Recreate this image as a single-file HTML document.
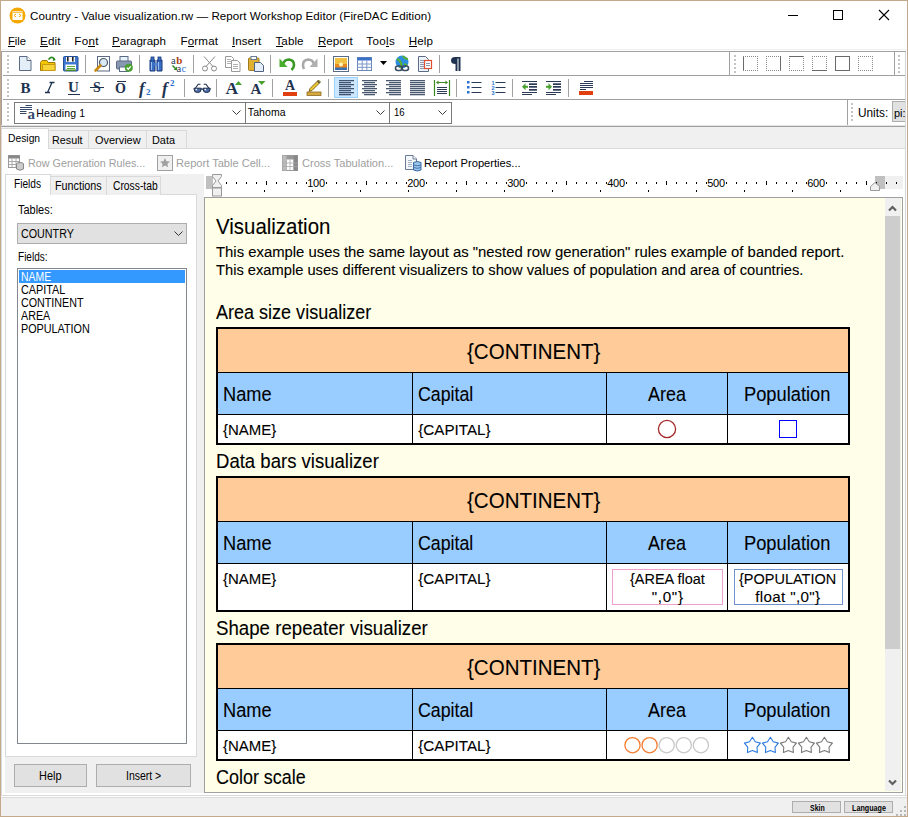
<!DOCTYPE html>
<html><head><meta charset="utf-8"><style>
html,body{margin:0;padding:0;}
body{width:908px;height:817px;position:relative;overflow:hidden;background:#fff;font-family:"Liberation Sans",sans-serif;}
.t{position:absolute;white-space:nowrap;}
.r{position:absolute;box-sizing:border-box;}
svg.r{overflow:visible;}
</style></head><body>
<svg class="r" style="left:9px;top:7px;" width="17" height="17" viewBox="0 0 17 17"><circle cx="8.5" cy="8.5" r="8" fill="#f7a800"/><rect x="3.5" y="4" width="10" height="9" fill="#fff"/><rect x="3.5" y="4" width="10" height="1.3" fill="#f7a800" opacity="0"/><path d="M3.5 5.2h10" stroke="#f7a800" stroke-width="1"/><path d="M7 7l-2 1.5 2 1.5M10 7l2 1.5-2 1.5" stroke="#f7a800" stroke-width="1" fill="none"/></svg>
<div class="t" style="left:30.00px;top:10.40px;font-size:11.6px;line-height:12px;color:#000;letter-spacing:0.053px;">Country - Value visualization.rw — Report Workshop Editor (FireDAC Edition)</div>
<div class="r" style="left:788px;top:15px;width:10px;height:1px;background:#000"></div>
<div class="r" style="left:833px;top:10px;width:10px;height:10px;border:1px solid #000"></div>
<svg class="r" style="left:878px;top:9px;" width="12" height="12" viewBox="0 0 12 12"><path d="M1 1L11 11M11 1L1 11" stroke="#000" stroke-width="1.1"/></svg>
<div class="t" style="left:8.25px;top:35.00px;font-size:11.6px;line-height:12px;color:#000;transform:scaleX(0.9638);transform-origin:0 0;">File</div>
<div class="r" style="left:8px;top:46px;width:7px;height:1px;background:#000"></div>
<div class="t" style="left:40.00px;top:35.00px;font-size:11.6px;line-height:12px;color:#000;letter-spacing:0.144px;">Edit</div>
<div class="r" style="left:40px;top:46px;width:8px;height:1px;background:#000"></div>
<div class="t" style="left:74.25px;top:35.00px;font-size:11.6px;line-height:12px;color:#000;letter-spacing:0.350px;">Font</div>
<div class="r" style="left:88px;top:46px;width:7px;height:1px;background:#000"></div>
<div class="t" style="left:112.00px;top:35.00px;font-size:11.6px;line-height:12px;color:#000;transform:scaleX(0.9968);transform-origin:0 0;">Paragraph</div>
<div class="r" style="left:112px;top:46px;width:8px;height:1px;background:#000"></div>
<div class="t" style="left:180.50px;top:35.00px;font-size:11.6px;line-height:12px;color:#000;letter-spacing:0.146px;">Format</div>
<div class="r" style="left:188px;top:46px;width:6px;height:1px;background:#000"></div>
<div class="t" style="left:232.00px;top:35.00px;font-size:11.6px;line-height:12px;color:#000;letter-spacing:0.050px;">Insert</div>
<div class="r" style="left:232px;top:46px;width:3px;height:1px;background:#000"></div>
<div class="t" style="left:275.50px;top:35.00px;font-size:11.6px;line-height:12px;color:#000;letter-spacing:0.069px;">Table</div>
<div class="r" style="left:276px;top:46px;width:7px;height:1px;background:#000"></div>
<div class="t" style="left:317.50px;top:35.00px;font-size:11.6px;line-height:12px;color:#000;transform:scaleX(0.9986);transform-origin:0 0;">Report</div>
<div class="r" style="left:318px;top:46px;width:8px;height:1px;background:#000"></div>
<div class="t" style="left:366.25px;top:35.00px;font-size:11.6px;line-height:12px;color:#000;letter-spacing:0.368px;">Tools</div>
<div class="r" style="left:386px;top:46px;width:3px;height:1px;background:#000"></div>
<div class="t" style="left:408.75px;top:35.00px;font-size:11.6px;line-height:12px;color:#000;letter-spacing:0.118px;">Help</div>
<div class="r" style="left:409px;top:46px;width:8px;height:1px;background:#000"></div>
<div class="r" style="left:1px;top:49px;width:906px;height:1px;background:#f0f0f0"></div>
<div class="r" style="left:1px;top:51px;width:905px;height:1px;background:#a0a0a0"></div>
<div class="r" style="left:1px;top:51px;width:1px;height:75px;background:#a0a0a0"></div>
<div class="r" style="left:3px;top:75px;width:903px;height:1px;background:#a0a0a0"></div>
<div class="r" style="left:3px;top:99px;width:903px;height:1px;background:#a0a0a0"></div>
<div class="r" style="left:1px;top:125px;width:905px;height:1px;background:#e3e3e3"></div>
<div class="r" style="left:1px;top:126px;width:905px;height:1px;background:#a0a0a0"></div>
<div class="r" style="left:1px;top:127px;width:905px;height:22px;background:#f0f0f0"></div>
<div class="r" style="left:48px;top:130px;width:41px;height:19px;background:#f0f0f0;border:1px solid #d9d9d9;border-bottom:none"></div>
<div class="r" style="left:88px;top:130px;width:59px;height:19px;background:#f0f0f0;border:1px solid #d9d9d9;border-bottom:none"></div>
<div class="r" style="left:146px;top:130px;width:41px;height:19px;background:#f0f0f0;border:1px solid #d9d9d9;border-bottom:none"></div>
<div class="r" style="left:1px;top:128px;width:48px;height:21px;background:#fff;border:1px solid #d9d9d9;border-bottom:none"></div>
<div class="r" style="left:48px;top:148px;width:858px;height:1px;background:#d9d9d9"></div>
<div class="t" style="left:8.40px;top:132.20px;font-size:11.6px;line-height:12px;color:#000;transform:scaleX(0.8898);transform-origin:0 0;">Design</div>
<div class="t" style="left:52.40px;top:134.40px;font-size:11.6px;line-height:12px;color:#000;transform:scaleX(0.9319);transform-origin:0 0;">Result</div>
<div class="t" style="left:94.70px;top:134.40px;font-size:11.6px;line-height:12px;color:#000;transform:scaleX(0.9425);transform-origin:0 0;">Overview</div>
<div class="t" style="left:152.40px;top:134.40px;font-size:11.6px;line-height:12px;color:#000;transform:scaleX(0.9393);transform-origin:0 0;">Data</div>
<div class="t" style="left:27.50px;top:156.80px;font-size:11.6px;line-height:12px;color:#a0a0a0;transform:scaleX(0.9286);transform-origin:0 0;">Row Generation Rules...</div>
<div class="t" style="left:176.40px;top:156.80px;font-size:11.6px;line-height:12px;color:#a0a0a0;transform:scaleX(0.9555);transform-origin:0 0;">Report Table Cell...</div>
<div class="t" style="left:301.50px;top:156.80px;font-size:11.6px;line-height:12px;color:#a0a0a0;transform:scaleX(0.9539);transform-origin:0 0;">Cross Tabulation...</div>
<div class="t" style="left:424.40px;top:156.80px;font-size:11.6px;line-height:12px;color:#000;transform:scaleX(0.9615);transform-origin:0 0;">Report Properties...</div>
<div class="r" style="left:5px;top:174px;width:199px;height:619px;background:#f0f0f0"></div>
<div class="r" style="left:5px;top:194px;width:192px;height:563px;background:#fff;border:1px solid #d9d9d9"></div>
<div class="r" style="left:50px;top:176px;width:57px;height:19px;background:#f0f0f0;border:1px solid #d9d9d9;border-bottom:none"></div>
<div class="r" style="left:106px;top:176px;width:55px;height:19px;background:#f0f0f0;border:1px solid #d9d9d9;border-bottom:none"></div>
<div class="r" style="left:5px;top:174px;width:46px;height:21px;background:#fff;border:1px solid #d9d9d9;border-bottom:none"></div>
<div class="t" style="left:13.70px;top:177.00px;font-size:12px;line-height:14px;color:#000;transform:scaleX(0.8458);transform-origin:0 0;">Fields</div>
<div class="t" style="left:55.00px;top:178.60px;font-size:12px;line-height:14px;color:#000;transform:scaleX(0.8986);transform-origin:0 0;">Functions</div>
<div class="t" style="left:113.40px;top:178.60px;font-size:12px;line-height:14px;color:#000;transform:scaleX(0.8584);transform-origin:0 0;">Cross-tab</div>
<div class="t" style="left:17.60px;top:202.80px;font-size:12px;line-height:14px;color:#000;transform:scaleX(0.9122);transform-origin:0 0;">Tables:</div>
<div class="r" style="left:17px;top:223px;width:170px;height:21px;background:#e1e1e1;border:1px solid #adadad"></div>
<div class="t" style="left:21.40px;top:227.00px;font-size:12px;line-height:14px;color:#000;transform:scaleX(0.8942);transform-origin:0 0;">COUNTRY</div>
<div class="t" style="left:17.60px;top:249.80px;font-size:12px;line-height:14px;color:#000;transform:scaleX(0.8362);transform-origin:0 0;">Fields:</div>
<div class="r" style="left:17px;top:268px;width:170px;height:476px;background:#fff;border:1px solid #828790"></div>
<div class="r" style="left:19px;top:270px;width:166px;height:13px;background:#3399ff"></div>
<div class="t" style="left:21.40px;top:270.00px;font-size:12px;line-height:14px;color:#fff;transform:scaleX(0.8679);transform-origin:0 0;">NAME</div>
<div class="t" style="left:21.40px;top:283.00px;font-size:12px;line-height:14px;color:#000;transform:scaleX(0.9026);transform-origin:0 0;">CAPITAL</div>
<div class="t" style="left:21.40px;top:296.00px;font-size:12px;line-height:14px;color:#000;transform:scaleX(0.8934);transform-origin:0 0;">CONTINENT</div>
<div class="t" style="left:21.40px;top:309.00px;font-size:12px;line-height:14px;color:#000;transform:scaleX(0.8944);transform-origin:0 0;">AREA</div>
<div class="t" style="left:21.40px;top:322.00px;font-size:12px;line-height:14px;color:#000;transform:scaleX(0.9001);transform-origin:0 0;">POPULATION</div>
<div class="r" style="left:14px;top:764px;width:73px;height:23px;background:#e1e1e1;border:1px solid #adadad"></div>
<div class="r" style="left:96px;top:764px;width:95px;height:23px;background:#e1e1e1;border:1px solid #adadad"></div>
<div class="t" style="left:39.30px;top:769.00px;font-size:12px;line-height:14px;color:#000;transform:scaleX(0.9102);transform-origin:0 0;">Help</div>
<div class="t" style="left:126.00px;top:769.00px;font-size:12px;line-height:14px;color:#000;transform:scaleX(0.8730);transform-origin:0 0;">Insert &gt;</div>
<div class="r" style="left:204px;top:197px;width:699px;height:596px;background:#fffee8;border:1px solid #a0a0a0"></div>
<div class="r" style="left:885px;top:198px;width:16px;height:593px;background:#f0f0f0"></div>
<div class="r" style="left:885px;top:216px;width:15px;height:433px;background:#cdcdcd"></div>
<div class="r" style="left:1px;top:795px;width:906px;height:1px;background:#d9d9d9"></div>
<div class="r" style="left:1px;top:797px;width:906px;height:1px;background:#dcdcdc"></div>
<div class="r" style="left:1px;top:798px;width:906px;height:18px;background:#f0f0f0"></div>
<div class="r" style="left:792px;top:801px;width:49px;height:12px;background:#e1e1e1;border:1px solid #adadad"></div>
<div class="r" style="left:844px;top:801px;width:49px;height:12px;background:#e1e1e1;border:1px solid #adadad"></div>
<div class="t" style="left:216.00px;top:214.00px;font-size:22.1px;line-height:25px;color:#000;-webkit-text-stroke:0.1px #000;transform:scaleX(0.9252);transform-origin:0 0;">Visualization</div>
<div class="t" style="left:216.30px;top:243.00px;font-size:15.2px;line-height:17px;color:#000;-webkit-text-stroke:0.1px #000;transform:scaleX(0.9782);transform-origin:0 0;">This example uses the same layout as "nested row generation" rules example of banded report.</div>
<div class="t" style="left:216.30px;top:261.00px;font-size:15.2px;line-height:17px;color:#000;-webkit-text-stroke:0.1px #000;transform:scaleX(0.9668);transform-origin:0 0;">This example uses different visualizers to show values of population and area of countries.</div>
<div class="t" style="left:215.50px;top:302.00px;font-size:19.3px;line-height:21px;color:#000;-webkit-text-stroke:0.1px #000;transform:scaleX(0.9346);transform-origin:0 0;">Area size visualizer</div>
<div class="r" style="left:216px;top:327px;width:634px;height:118px;background:#fff;border:2px solid #000"></div>
<div class="r" style="left:218px;top:329px;width:630px;height:43px;background:#ffcc99"></div>
<div class="r" style="left:218px;top:372px;width:630px;height:1px;background:#000"></div>
<div class="r" style="left:218px;top:373px;width:630px;height:41px;background:#99ccff"></div>
<div class="r" style="left:218px;top:414px;width:630px;height:1px;background:#000"></div>
<div class="r" style="left:412px;top:373px;width:1px;height:71px;background:#000"></div>
<div class="r" style="left:606px;top:373px;width:1px;height:71px;background:#000"></div>
<div class="r" style="left:727px;top:373px;width:1px;height:71px;background:#000"></div>
<div class="t" style="left:466.80px;top:339.00px;font-size:22.1px;line-height:25px;color:#000;-webkit-text-stroke:0.1px #000;transform:scaleX(0.9286);transform-origin:0 0;">{CONTINENT}</div>
<div class="t" style="left:223.30px;top:384.00px;font-size:19.3px;line-height:21px;color:#000;-webkit-text-stroke:0.1px #000;transform:scaleX(0.9451);transform-origin:0 0;">Name</div>
<div class="t" style="left:418.20px;top:384.00px;font-size:19.3px;line-height:21px;color:#000;-webkit-text-stroke:0.1px #000;transform:scaleX(0.9213);transform-origin:0 0;">Capital</div>
<div class="t" style="left:647.70px;top:384.00px;font-size:19.3px;line-height:21px;color:#000;-webkit-text-stroke:0.1px #000;transform:scaleX(0.9312);transform-origin:0 0;">Area</div>
<div class="t" style="left:744.40px;top:384.00px;font-size:19.3px;line-height:21px;color:#000;-webkit-text-stroke:0.1px #000;transform:scaleX(0.9486);transform-origin:0 0;">Population</div>
<div class="t" style="left:223.30px;top:421.00px;font-size:15.2px;line-height:17px;color:#000;-webkit-text-stroke:0.1px #000;transform:scaleX(0.9850);transform-origin:0 0;">{NAME}</div>
<div class="t" style="left:418.20px;top:421.00px;font-size:15.2px;line-height:17px;color:#000;letter-spacing:0.018px;-webkit-text-stroke:0.1px #000;">{CAPITAL}</div>
<svg class="r" style="left:657px;top:419px;" width="20" height="20" viewBox="0 0 20 20"><circle cx="10" cy="10" r="8.6" fill="none" stroke="#a52a2a" stroke-width="1.3"/></svg>
<div class="r" style="left:779px;top:420px;width:18px;height:18px;border:1.5px solid #0000ff"></div>
<div class="t" style="left:215.50px;top:451.00px;font-size:19.3px;line-height:21px;color:#000;-webkit-text-stroke:0.1px #000;transform:scaleX(0.9619);transform-origin:0 0;">Data bars visualizer</div>
<div class="r" style="left:216px;top:476px;width:634px;height:136px;background:#fff;border:2px solid #000"></div>
<div class="r" style="left:218px;top:478px;width:630px;height:43px;background:#ffcc99"></div>
<div class="r" style="left:218px;top:521px;width:630px;height:1px;background:#000"></div>
<div class="r" style="left:218px;top:522px;width:630px;height:41px;background:#99ccff"></div>
<div class="r" style="left:218px;top:563px;width:630px;height:1px;background:#000"></div>
<div class="r" style="left:412px;top:522px;width:1px;height:89px;background:#000"></div>
<div class="r" style="left:606px;top:522px;width:1px;height:89px;background:#000"></div>
<div class="r" style="left:727px;top:522px;width:1px;height:89px;background:#000"></div>
<div class="t" style="left:466.80px;top:488.00px;font-size:22.1px;line-height:25px;color:#000;-webkit-text-stroke:0.1px #000;transform:scaleX(0.9286);transform-origin:0 0;">{CONTINENT}</div>
<div class="t" style="left:223.30px;top:533.00px;font-size:19.3px;line-height:21px;color:#000;-webkit-text-stroke:0.1px #000;transform:scaleX(0.9451);transform-origin:0 0;">Name</div>
<div class="t" style="left:418.20px;top:533.00px;font-size:19.3px;line-height:21px;color:#000;-webkit-text-stroke:0.1px #000;transform:scaleX(0.9213);transform-origin:0 0;">Capital</div>
<div class="t" style="left:647.70px;top:533.00px;font-size:19.3px;line-height:21px;color:#000;-webkit-text-stroke:0.1px #000;transform:scaleX(0.9312);transform-origin:0 0;">Area</div>
<div class="t" style="left:744.40px;top:533.00px;font-size:19.3px;line-height:21px;color:#000;-webkit-text-stroke:0.1px #000;transform:scaleX(0.9486);transform-origin:0 0;">Population</div>
<div class="t" style="left:223.30px;top:570.00px;font-size:15.2px;line-height:17px;color:#000;-webkit-text-stroke:0.1px #000;transform:scaleX(0.9850);transform-origin:0 0;">{NAME}</div>
<div class="t" style="left:418.20px;top:570.00px;font-size:15.2px;line-height:17px;color:#000;letter-spacing:0.018px;-webkit-text-stroke:0.1px #000;">{CAPITAL}</div>
<div class="r" style="left:612px;top:569px;width:111px;height:36px;border:1px solid #f0a0d0"></div>
<div class="r" style="left:734px;top:569px;width:109px;height:36px;border:1px solid #7090d0"></div>
<div class="t" style="left:629.70px;top:570.00px;font-size:15.2px;line-height:17px;color:#000;-webkit-text-stroke:0.1px #000;transform:scaleX(0.9531);transform-origin:0 0;">{AREA float</div>
<div class="t" style="left:651.70px;top:588.00px;font-size:15.2px;line-height:17px;color:#000;letter-spacing:0.706px;-webkit-text-stroke:0.1px #000;">",0"}</div>
<div class="t" style="left:739.00px;top:570.00px;font-size:15.2px;line-height:17px;color:#000;-webkit-text-stroke:0.1px #000;transform:scaleX(0.9540);transform-origin:0 0;">{POPULATION</div>
<div class="t" style="left:755.20px;top:588.00px;font-size:15.2px;line-height:17px;color:#000;letter-spacing:0.344px;-webkit-text-stroke:0.1px #000;">float ",0"}</div>
<div class="t" style="left:215.50px;top:618.00px;font-size:19.3px;line-height:21px;color:#000;-webkit-text-stroke:0.1px #000;transform:scaleX(0.9686);transform-origin:0 0;">Shape repeater visualizer</div>
<div class="r" style="left:216px;top:643px;width:634px;height:118px;background:#fff;border:2px solid #000"></div>
<div class="r" style="left:218px;top:645px;width:630px;height:43px;background:#ffcc99"></div>
<div class="r" style="left:218px;top:688px;width:630px;height:1px;background:#000"></div>
<div class="r" style="left:218px;top:689px;width:630px;height:41px;background:#99ccff"></div>
<div class="r" style="left:218px;top:730px;width:630px;height:1px;background:#000"></div>
<div class="r" style="left:412px;top:689px;width:1px;height:71px;background:#000"></div>
<div class="r" style="left:606px;top:689px;width:1px;height:71px;background:#000"></div>
<div class="r" style="left:727px;top:689px;width:1px;height:71px;background:#000"></div>
<div class="t" style="left:466.80px;top:655.00px;font-size:22.1px;line-height:25px;color:#000;-webkit-text-stroke:0.1px #000;transform:scaleX(0.9286);transform-origin:0 0;">{CONTINENT}</div>
<div class="t" style="left:223.30px;top:700.00px;font-size:19.3px;line-height:21px;color:#000;-webkit-text-stroke:0.1px #000;transform:scaleX(0.9451);transform-origin:0 0;">Name</div>
<div class="t" style="left:418.20px;top:700.00px;font-size:19.3px;line-height:21px;color:#000;-webkit-text-stroke:0.1px #000;transform:scaleX(0.9213);transform-origin:0 0;">Capital</div>
<div class="t" style="left:647.70px;top:700.00px;font-size:19.3px;line-height:21px;color:#000;-webkit-text-stroke:0.1px #000;transform:scaleX(0.9312);transform-origin:0 0;">Area</div>
<div class="t" style="left:744.40px;top:700.00px;font-size:19.3px;line-height:21px;color:#000;-webkit-text-stroke:0.1px #000;transform:scaleX(0.9486);transform-origin:0 0;">Population</div>
<div class="t" style="left:223.30px;top:737.00px;font-size:15.2px;line-height:17px;color:#000;-webkit-text-stroke:0.1px #000;transform:scaleX(0.9850);transform-origin:0 0;">{NAME}</div>
<div class="t" style="left:418.20px;top:737.00px;font-size:15.2px;line-height:17px;color:#000;letter-spacing:0.018px;-webkit-text-stroke:0.1px #000;">{CAPITAL}</div>
<div class="t" style="left:215.50px;top:767.00px;font-size:19.3px;line-height:21px;color:#000;-webkit-text-stroke:0.1px #000;transform:scaleX(0.9306);transform-origin:0 0;">Color scale</div>
<div class="r" style="left:7px;top:55px;width:2px;height:2px;background:#c4c4c4"></div>
<div class="r" style="left:7px;top:59px;width:2px;height:2px;background:#c4c4c4"></div>
<div class="r" style="left:7px;top:63px;width:2px;height:2px;background:#c4c4c4"></div>
<div class="r" style="left:7px;top:67px;width:2px;height:2px;background:#c4c4c4"></div>
<div class="r" style="left:7px;top:71px;width:2px;height:2px;background:#c4c4c4"></div>
<svg class="r" style="left:19px;top:56px;" width="13" height="16" viewBox="0 0 13 16"><path d="M0.5 0.5h7.5l4 4v10h-11.5z" fill="#e3eef8" stroke="#5b6b85"/><path d="M8 0.5v4h4" fill="#fff" stroke="#5b6b85"/></svg>
<svg class="r" style="left:40px;top:56px;" width="16" height="16" viewBox="0 0 16 16"><path d="M0.5 6.5v8h14.5v-8h-7l-1-2h-5z" fill="#f3c600" stroke="#a07a10"/><path d="M2.5 8.5h12.5v6h-12.5z" fill="#f7d538" stroke="#c89a10"/><path d="M8.5 3.5q3-4 6-0.5" fill="none" stroke="#2d8a20" stroke-width="1.6"/><path d="M13 1.5l3 2.5-3.2 1z" fill="#2d8a20"/></svg>
<svg class="r" style="left:63px;top:56px;" width="16" height="16" viewBox="0 0 16 16"><rect x="0.5" y="0.5" width="14.5" height="14.5" rx="1" fill="#3f78d0" stroke="#244e98"/><rect x="3" y="1" width="9" height="5" fill="#f4f4f4"/><rect x="4" y="1" width="1.6" height="4.5" fill="#222"/><rect x="9" y="1" width="1.6" height="4.5" fill="#222"/><rect x="2.5" y="8.5" width="10.5" height="6" fill="#fff"/><path d="M4 10.5h8M4 12.5h8" stroke="#5aaa3a" stroke-width="1"/><rect x="2.5" y="13.5" width="10.5" height="1.5" fill="#4a8a20"/></svg>
<div class="r" style="left:85px;top:55px;width:1px;height:18px;background:#a0a0a0"></div>
<svg class="r" style="left:94px;top:56px;" width="16" height="16" viewBox="0 0 16 16"><rect x="3.5" y="0.5" width="12" height="14.5" fill="#fff" stroke="#5b6b85"/><circle cx="9.5" cy="6.5" r="4" fill="#dbe9f5" stroke="#4a5a70" stroke-width="1.2"/><path d="M6.5 9.5l-5 5" stroke="#c88a10" stroke-width="2.6" stroke-linecap="round"/></svg>
<svg class="r" style="left:116px;top:56px;" width="17" height="16" viewBox="0 0 17 16"><rect x="4" y="0.5" width="8" height="5" fill="#e8f2fa" stroke="#5b6b85"/><rect x="0.5" y="5" width="15" height="8" rx="1" fill="#8898b0" stroke="#5b6b85"/><rect x="3.5" y="11" width="9" height="4.5" fill="#fff" stroke="#5b6b85"/><circle cx="12.8" cy="11.7" r="4" fill="#4aa030"/><path d="M10.8 11.7l1.5 1.5 2.5-2.8" stroke="#fff" stroke-width="1.3" fill="none"/></svg>
<div class="r" style="left:139px;top:55px;width:1px;height:18px;background:#a0a0a0"></div>
<svg class="r" style="left:149px;top:56px;" width="15" height="16" viewBox="0 0 15 16"><path d="M1 4h5v11h-5z M8 4h5v11h-5z" fill="#3a6fc8" stroke="#1a3a78"/><rect x="2" y="1" width="3" height="4" fill="#3a6fc8" stroke="#1a3a78" stroke-width="0.8"/><rect x="9" y="1" width="3" height="4" fill="#3a6fc8" stroke="#1a3a78" stroke-width="0.8"/><rect x="5.5" y="7" width="3" height="3" fill="#5a8ad8"/><path d="M2.5 6v8M9.5 6v8" stroke="#9cc0f0" stroke-width="1"/></svg>
<svg class="r" style="left:171px;top:56px;" width="16" height="16" viewBox="0 0 16 16"><text x="0" y="7.5" font-family="Liberation Serif" font-size="10.5" fill="#2a3a5a">a</text><text x="5.2" y="8" font-family="Liberation Serif" font-size="11" font-weight="700" fill="#b04010">b</text><text x="5.5" y="15.5" font-family="Liberation Serif" font-size="10.5" fill="#2a3a5a">a</text><text x="10.6" y="15.5" font-family="Liberation Serif" font-size="10.5" fill="#3070d0">c</text><path d="M1.5 9.5l3.5 3.5" stroke="#2d8a20" stroke-width="1.4" fill="none"/><path d="M2.5 14h3.5v-3.5z" fill="#2d8a20"/></svg>
<div class="r" style="left:193px;top:55px;width:1px;height:18px;background:#a0a0a0"></div>
<svg class="r" style="left:202px;top:56px;" width="16" height="16" viewBox="0 0 16 16"><path d="M2 0.5l9 10M13 0.5l-9 10" stroke="#888" stroke-width="1"/><circle cx="3" cy="12.5" r="2.5" fill="none" stroke="#888"/><circle cx="12" cy="12.5" r="2.5" fill="none" stroke="#888"/></svg>
<svg class="r" style="left:225px;top:56px;" width="16" height="16" viewBox="0 0 16 16"><path d="M0.5 0.5h6l2 2v9h-8z" fill="#fff" stroke="#9a9a9a"/><path d="M6.5 4.5h6l2.5 2.5v8.5h-8.5z" fill="#fff" stroke="#9a9a9a"/><path d="M2 3.5h4M2 5.5h4M2 7.5h4M8 8.5h5M8 10.5h5M8 12.5h5" stroke="#b0b0b0" stroke-width="1"/></svg>
<svg class="r" style="left:248px;top:56px;" width="16" height="16" viewBox="0 0 16 16"><rect x="0.5" y="2" width="10.5" height="12.5" rx="1" fill="#e0b030" stroke="#a07a20"/><rect x="3" y="0.5" width="5.5" height="3" fill="#fff" stroke="#6b7b95"/><path d="M6.5 6.5h6l3 3v6h-9z" fill="#e3eef8" stroke="#4f6080"/></svg>
<div class="r" style="left:270px;top:55px;width:1px;height:18px;background:#a0a0a0"></div>
<svg class="r" style="left:279px;top:56px;" width="16" height="16" viewBox="0 0 16 16"><path d="M4 8.5q1-5 6-5q5 0.5 5 5.5q0 3-2.5 5" fill="none" stroke="#3b9a25" stroke-width="2.6"/><path d="M0.5 2.5l0 8.5 8 0z" fill="#4aae2c"/></svg>
<svg class="r" style="left:302px;top:56px;" width="16" height="16" viewBox="0 0 16 16"><path d="M12 8.5q-1-5-6-5q-5 0.5-5 5.5q0 2 1 4" fill="none" stroke="#a8a8a8" stroke-width="2.6"/><path d="M15.5 2.5l0 8.5-8 0z" fill="#b0b0b0"/></svg>
<div class="r" style="left:324px;top:55px;width:1px;height:18px;background:#a0a0a0"></div>
<svg class="r" style="left:333px;top:56px;" width="16" height="16" viewBox="0 0 16 16"><rect x="0.5" y="0.5" width="15" height="15" fill="#fff" stroke="#5b6b85"/><rect x="2" y="2" width="12" height="6" fill="#f0c040"/><rect x="2" y="8" width="12" height="6" fill="#e88a20"/><circle cx="8" cy="8.5" r="2" fill="#fff6c0"/><rect x="2" y="11.5" width="12" height="2.5" fill="#3a70b0"/></svg>
<svg class="r" style="left:357px;top:57px;" width="15" height="15" viewBox="0 0 15 15"><rect x="0.5" y="0.5" width="14" height="13" fill="#fff" stroke="#6b88b8"/><rect x="0.5" y="0.5" width="14" height="3" fill="#3a70c8"/><path d="M5.2 3.5v10M9.8 3.5v10M0.5 7h14M0.5 10.3h14" stroke="#7a98c8" stroke-width="1"/></svg>
<svg class="r" style="left:380px;top:61px;" width="7" height="5" viewBox="0 0 7 5"><path d="M0 0h7l-3.5 4z" fill="#000"/></svg>
<svg class="r" style="left:394px;top:55px;" width="17" height="17" viewBox="0 0 17 17"><circle cx="8" cy="7" r="6.5" fill="#2c8ee0"/><path d="M3 4q3 1 4 4t-1 5M9 1q2 3 5 3M10 9q2 0 3 2" stroke="#5ab030" stroke-width="2.2" fill="none"/><rect x="1.5" y="11" width="6.5" height="4.5" rx="2.2" fill="none" stroke="#3a4a60" stroke-width="1.6"/><rect x="8" y="11" width="6.5" height="4.5" rx="2.2" fill="none" stroke="#3a4a60" stroke-width="1.6"/></svg>
<svg class="r" style="left:418px;top:56px;" width="15" height="16" viewBox="0 0 15 16"><path d="M0.5 0.5h7l3 3v12h-10z" fill="#eef4fa" stroke="#5b6b85"/><path d="M2 4.5h4M2 6.5h4M2 8.5h4M2 10.5h4M2 12.5h4" stroke="#8a9ab5" stroke-width="1"/><rect x="6.5" y="4.5" width="7" height="8" fill="#fff" stroke="#e05030" stroke-width="1.2"/><path d="M8 7.5h4M8 9.5h4" stroke="#8a9ab5" stroke-width="1"/></svg>
<div class="r" style="left:439px;top:55px;width:1px;height:18px;background:#a0a0a0"></div>
<svg class="r" style="left:450px;top:56px;" width="11" height="16" viewBox="0 0 11 16"><path d="M5 1h5.5v14h-2v-12.5h-1v12.5h-2v-7q-4.5 0-4.5-3.5t4-3.5z" fill="#1f3350"/></svg>
<div class="r" style="left:729px;top:52px;width:1px;height:23px;background:#a0a0a0"></div>
<div class="r" style="left:731px;top:75px;width:163px;height:1px;background:#a0a0a0"></div>
<div class="r" style="left:734px;top:55px;width:2px;height:2px;background:#c4c4c4"></div>
<div class="r" style="left:734px;top:59px;width:2px;height:2px;background:#c4c4c4"></div>
<div class="r" style="left:734px;top:63px;width:2px;height:2px;background:#c4c4c4"></div>
<div class="r" style="left:734px;top:67px;width:2px;height:2px;background:#c4c4c4"></div>
<div class="r" style="left:734px;top:71px;width:2px;height:2px;background:#c4c4c4"></div>
<svg class="r" style="left:743px;top:56px;" width="15" height="15" viewBox="0 0 15 15"><rect x="0" y="0" width="1" height="1" fill="#6a6a6a"/><rect x="0" y="1" width="1" height="1" fill="#6a6a6a"/><rect x="0" y="2" width="1" height="1" fill="#6a6a6a"/><rect x="0" y="3" width="1" height="1" fill="#6a6a6a"/><rect x="0" y="4" width="1" height="1" fill="#6a6a6a"/><rect x="0" y="5" width="1" height="1" fill="#6a6a6a"/><rect x="0" y="6" width="1" height="1" fill="#6a6a6a"/><rect x="0" y="7" width="1" height="1" fill="#6a6a6a"/><rect x="0" y="8" width="1" height="1" fill="#6a6a6a"/><rect x="0" y="9" width="1" height="1" fill="#6a6a6a"/><rect x="0" y="10" width="1" height="1" fill="#6a6a6a"/><rect x="0" y="11" width="1" height="1" fill="#6a6a6a"/><rect x="0" y="12" width="1" height="1" fill="#6a6a6a"/><rect x="0" y="13" width="1" height="1" fill="#6a6a6a"/><rect x="0" y="14" width="1" height="1" fill="#6a6a6a"/><rect x="0" y="0" width="1" height="1" fill="#8a8a8a"/><rect x="2" y="0" width="1" height="1" fill="#8a8a8a"/><rect x="4" y="0" width="1" height="1" fill="#8a8a8a"/><rect x="6" y="0" width="1" height="1" fill="#8a8a8a"/><rect x="8" y="0" width="1" height="1" fill="#8a8a8a"/><rect x="10" y="0" width="1" height="1" fill="#8a8a8a"/><rect x="12" y="0" width="1" height="1" fill="#8a8a8a"/><rect x="14" y="0" width="1" height="1" fill="#8a8a8a"/><rect x="14" y="0" width="1" height="1" fill="#8a8a8a"/><rect x="14" y="2" width="1" height="1" fill="#8a8a8a"/><rect x="14" y="4" width="1" height="1" fill="#8a8a8a"/><rect x="14" y="6" width="1" height="1" fill="#8a8a8a"/><rect x="14" y="8" width="1" height="1" fill="#8a8a8a"/><rect x="14" y="10" width="1" height="1" fill="#8a8a8a"/><rect x="14" y="12" width="1" height="1" fill="#8a8a8a"/><rect x="14" y="14" width="1" height="1" fill="#8a8a8a"/><rect x="0" y="14" width="1" height="1" fill="#8a8a8a"/><rect x="2" y="14" width="1" height="1" fill="#8a8a8a"/><rect x="4" y="14" width="1" height="1" fill="#8a8a8a"/><rect x="6" y="14" width="1" height="1" fill="#8a8a8a"/><rect x="8" y="14" width="1" height="1" fill="#8a8a8a"/><rect x="10" y="14" width="1" height="1" fill="#8a8a8a"/><rect x="12" y="14" width="1" height="1" fill="#8a8a8a"/><rect x="14" y="14" width="1" height="1" fill="#8a8a8a"/></svg>
<svg class="r" style="left:766px;top:56px;" width="15" height="15" viewBox="0 0 15 15"><rect x="0" y="0" width="1" height="1" fill="#8a8a8a"/><rect x="0" y="2" width="1" height="1" fill="#8a8a8a"/><rect x="0" y="4" width="1" height="1" fill="#8a8a8a"/><rect x="0" y="6" width="1" height="1" fill="#8a8a8a"/><rect x="0" y="8" width="1" height="1" fill="#8a8a8a"/><rect x="0" y="10" width="1" height="1" fill="#8a8a8a"/><rect x="0" y="12" width="1" height="1" fill="#8a8a8a"/><rect x="0" y="14" width="1" height="1" fill="#8a8a8a"/><rect x="0" y="0" width="1" height="1" fill="#8a8a8a"/><rect x="2" y="0" width="1" height="1" fill="#8a8a8a"/><rect x="4" y="0" width="1" height="1" fill="#8a8a8a"/><rect x="6" y="0" width="1" height="1" fill="#8a8a8a"/><rect x="8" y="0" width="1" height="1" fill="#8a8a8a"/><rect x="10" y="0" width="1" height="1" fill="#8a8a8a"/><rect x="12" y="0" width="1" height="1" fill="#8a8a8a"/><rect x="14" y="0" width="1" height="1" fill="#8a8a8a"/><rect x="14" y="0" width="1" height="1" fill="#6a6a6a"/><rect x="14" y="1" width="1" height="1" fill="#6a6a6a"/><rect x="14" y="2" width="1" height="1" fill="#6a6a6a"/><rect x="14" y="3" width="1" height="1" fill="#6a6a6a"/><rect x="14" y="4" width="1" height="1" fill="#6a6a6a"/><rect x="14" y="5" width="1" height="1" fill="#6a6a6a"/><rect x="14" y="6" width="1" height="1" fill="#6a6a6a"/><rect x="14" y="7" width="1" height="1" fill="#6a6a6a"/><rect x="14" y="8" width="1" height="1" fill="#6a6a6a"/><rect x="14" y="9" width="1" height="1" fill="#6a6a6a"/><rect x="14" y="10" width="1" height="1" fill="#6a6a6a"/><rect x="14" y="11" width="1" height="1" fill="#6a6a6a"/><rect x="14" y="12" width="1" height="1" fill="#6a6a6a"/><rect x="14" y="13" width="1" height="1" fill="#6a6a6a"/><rect x="14" y="14" width="1" height="1" fill="#6a6a6a"/><rect x="0" y="14" width="1" height="1" fill="#8a8a8a"/><rect x="2" y="14" width="1" height="1" fill="#8a8a8a"/><rect x="4" y="14" width="1" height="1" fill="#8a8a8a"/><rect x="6" y="14" width="1" height="1" fill="#8a8a8a"/><rect x="8" y="14" width="1" height="1" fill="#8a8a8a"/><rect x="10" y="14" width="1" height="1" fill="#8a8a8a"/><rect x="12" y="14" width="1" height="1" fill="#8a8a8a"/><rect x="14" y="14" width="1" height="1" fill="#8a8a8a"/></svg>
<svg class="r" style="left:789px;top:56px;" width="15" height="15" viewBox="0 0 15 15"><rect x="0" y="0" width="1" height="1" fill="#8a8a8a"/><rect x="0" y="2" width="1" height="1" fill="#8a8a8a"/><rect x="0" y="4" width="1" height="1" fill="#8a8a8a"/><rect x="0" y="6" width="1" height="1" fill="#8a8a8a"/><rect x="0" y="8" width="1" height="1" fill="#8a8a8a"/><rect x="0" y="10" width="1" height="1" fill="#8a8a8a"/><rect x="0" y="12" width="1" height="1" fill="#8a8a8a"/><rect x="0" y="14" width="1" height="1" fill="#8a8a8a"/><rect x="0" y="0" width="1" height="1" fill="#6a6a6a"/><rect x="1" y="0" width="1" height="1" fill="#6a6a6a"/><rect x="2" y="0" width="1" height="1" fill="#6a6a6a"/><rect x="3" y="0" width="1" height="1" fill="#6a6a6a"/><rect x="4" y="0" width="1" height="1" fill="#6a6a6a"/><rect x="5" y="0" width="1" height="1" fill="#6a6a6a"/><rect x="6" y="0" width="1" height="1" fill="#6a6a6a"/><rect x="7" y="0" width="1" height="1" fill="#6a6a6a"/><rect x="8" y="0" width="1" height="1" fill="#6a6a6a"/><rect x="9" y="0" width="1" height="1" fill="#6a6a6a"/><rect x="10" y="0" width="1" height="1" fill="#6a6a6a"/><rect x="11" y="0" width="1" height="1" fill="#6a6a6a"/><rect x="12" y="0" width="1" height="1" fill="#6a6a6a"/><rect x="13" y="0" width="1" height="1" fill="#6a6a6a"/><rect x="14" y="0" width="1" height="1" fill="#6a6a6a"/><rect x="14" y="0" width="1" height="1" fill="#8a8a8a"/><rect x="14" y="2" width="1" height="1" fill="#8a8a8a"/><rect x="14" y="4" width="1" height="1" fill="#8a8a8a"/><rect x="14" y="6" width="1" height="1" fill="#8a8a8a"/><rect x="14" y="8" width="1" height="1" fill="#8a8a8a"/><rect x="14" y="10" width="1" height="1" fill="#8a8a8a"/><rect x="14" y="12" width="1" height="1" fill="#8a8a8a"/><rect x="14" y="14" width="1" height="1" fill="#8a8a8a"/><rect x="0" y="14" width="1" height="1" fill="#8a8a8a"/><rect x="2" y="14" width="1" height="1" fill="#8a8a8a"/><rect x="4" y="14" width="1" height="1" fill="#8a8a8a"/><rect x="6" y="14" width="1" height="1" fill="#8a8a8a"/><rect x="8" y="14" width="1" height="1" fill="#8a8a8a"/><rect x="10" y="14" width="1" height="1" fill="#8a8a8a"/><rect x="12" y="14" width="1" height="1" fill="#8a8a8a"/><rect x="14" y="14" width="1" height="1" fill="#8a8a8a"/></svg>
<svg class="r" style="left:812px;top:56px;" width="15" height="15" viewBox="0 0 15 15"><rect x="0" y="0" width="1" height="1" fill="#8a8a8a"/><rect x="0" y="2" width="1" height="1" fill="#8a8a8a"/><rect x="0" y="4" width="1" height="1" fill="#8a8a8a"/><rect x="0" y="6" width="1" height="1" fill="#8a8a8a"/><rect x="0" y="8" width="1" height="1" fill="#8a8a8a"/><rect x="0" y="10" width="1" height="1" fill="#8a8a8a"/><rect x="0" y="12" width="1" height="1" fill="#8a8a8a"/><rect x="0" y="14" width="1" height="1" fill="#8a8a8a"/><rect x="0" y="0" width="1" height="1" fill="#8a8a8a"/><rect x="2" y="0" width="1" height="1" fill="#8a8a8a"/><rect x="4" y="0" width="1" height="1" fill="#8a8a8a"/><rect x="6" y="0" width="1" height="1" fill="#8a8a8a"/><rect x="8" y="0" width="1" height="1" fill="#8a8a8a"/><rect x="10" y="0" width="1" height="1" fill="#8a8a8a"/><rect x="12" y="0" width="1" height="1" fill="#8a8a8a"/><rect x="14" y="0" width="1" height="1" fill="#8a8a8a"/><rect x="14" y="0" width="1" height="1" fill="#8a8a8a"/><rect x="14" y="2" width="1" height="1" fill="#8a8a8a"/><rect x="14" y="4" width="1" height="1" fill="#8a8a8a"/><rect x="14" y="6" width="1" height="1" fill="#8a8a8a"/><rect x="14" y="8" width="1" height="1" fill="#8a8a8a"/><rect x="14" y="10" width="1" height="1" fill="#8a8a8a"/><rect x="14" y="12" width="1" height="1" fill="#8a8a8a"/><rect x="14" y="14" width="1" height="1" fill="#8a8a8a"/><rect x="0" y="14" width="1" height="1" fill="#6a6a6a"/><rect x="1" y="14" width="1" height="1" fill="#6a6a6a"/><rect x="2" y="14" width="1" height="1" fill="#6a6a6a"/><rect x="3" y="14" width="1" height="1" fill="#6a6a6a"/><rect x="4" y="14" width="1" height="1" fill="#6a6a6a"/><rect x="5" y="14" width="1" height="1" fill="#6a6a6a"/><rect x="6" y="14" width="1" height="1" fill="#6a6a6a"/><rect x="7" y="14" width="1" height="1" fill="#6a6a6a"/><rect x="8" y="14" width="1" height="1" fill="#6a6a6a"/><rect x="9" y="14" width="1" height="1" fill="#6a6a6a"/><rect x="10" y="14" width="1" height="1" fill="#6a6a6a"/><rect x="11" y="14" width="1" height="1" fill="#6a6a6a"/><rect x="12" y="14" width="1" height="1" fill="#6a6a6a"/><rect x="13" y="14" width="1" height="1" fill="#6a6a6a"/><rect x="14" y="14" width="1" height="1" fill="#6a6a6a"/></svg>
<svg class="r" style="left:835px;top:56px;" width="15" height="15" viewBox="0 0 15 15"><rect x="0" y="0" width="1" height="1" fill="#6a6a6a"/><rect x="0" y="1" width="1" height="1" fill="#6a6a6a"/><rect x="0" y="2" width="1" height="1" fill="#6a6a6a"/><rect x="0" y="3" width="1" height="1" fill="#6a6a6a"/><rect x="0" y="4" width="1" height="1" fill="#6a6a6a"/><rect x="0" y="5" width="1" height="1" fill="#6a6a6a"/><rect x="0" y="6" width="1" height="1" fill="#6a6a6a"/><rect x="0" y="7" width="1" height="1" fill="#6a6a6a"/><rect x="0" y="8" width="1" height="1" fill="#6a6a6a"/><rect x="0" y="9" width="1" height="1" fill="#6a6a6a"/><rect x="0" y="10" width="1" height="1" fill="#6a6a6a"/><rect x="0" y="11" width="1" height="1" fill="#6a6a6a"/><rect x="0" y="12" width="1" height="1" fill="#6a6a6a"/><rect x="0" y="13" width="1" height="1" fill="#6a6a6a"/><rect x="0" y="14" width="1" height="1" fill="#6a6a6a"/><rect x="0" y="0" width="1" height="1" fill="#6a6a6a"/><rect x="1" y="0" width="1" height="1" fill="#6a6a6a"/><rect x="2" y="0" width="1" height="1" fill="#6a6a6a"/><rect x="3" y="0" width="1" height="1" fill="#6a6a6a"/><rect x="4" y="0" width="1" height="1" fill="#6a6a6a"/><rect x="5" y="0" width="1" height="1" fill="#6a6a6a"/><rect x="6" y="0" width="1" height="1" fill="#6a6a6a"/><rect x="7" y="0" width="1" height="1" fill="#6a6a6a"/><rect x="8" y="0" width="1" height="1" fill="#6a6a6a"/><rect x="9" y="0" width="1" height="1" fill="#6a6a6a"/><rect x="10" y="0" width="1" height="1" fill="#6a6a6a"/><rect x="11" y="0" width="1" height="1" fill="#6a6a6a"/><rect x="12" y="0" width="1" height="1" fill="#6a6a6a"/><rect x="13" y="0" width="1" height="1" fill="#6a6a6a"/><rect x="14" y="0" width="1" height="1" fill="#6a6a6a"/><rect x="14" y="0" width="1" height="1" fill="#6a6a6a"/><rect x="14" y="1" width="1" height="1" fill="#6a6a6a"/><rect x="14" y="2" width="1" height="1" fill="#6a6a6a"/><rect x="14" y="3" width="1" height="1" fill="#6a6a6a"/><rect x="14" y="4" width="1" height="1" fill="#6a6a6a"/><rect x="14" y="5" width="1" height="1" fill="#6a6a6a"/><rect x="14" y="6" width="1" height="1" fill="#6a6a6a"/><rect x="14" y="7" width="1" height="1" fill="#6a6a6a"/><rect x="14" y="8" width="1" height="1" fill="#6a6a6a"/><rect x="14" y="9" width="1" height="1" fill="#6a6a6a"/><rect x="14" y="10" width="1" height="1" fill="#6a6a6a"/><rect x="14" y="11" width="1" height="1" fill="#6a6a6a"/><rect x="14" y="12" width="1" height="1" fill="#6a6a6a"/><rect x="14" y="13" width="1" height="1" fill="#6a6a6a"/><rect x="14" y="14" width="1" height="1" fill="#6a6a6a"/><rect x="0" y="14" width="1" height="1" fill="#6a6a6a"/><rect x="1" y="14" width="1" height="1" fill="#6a6a6a"/><rect x="2" y="14" width="1" height="1" fill="#6a6a6a"/><rect x="3" y="14" width="1" height="1" fill="#6a6a6a"/><rect x="4" y="14" width="1" height="1" fill="#6a6a6a"/><rect x="5" y="14" width="1" height="1" fill="#6a6a6a"/><rect x="6" y="14" width="1" height="1" fill="#6a6a6a"/><rect x="7" y="14" width="1" height="1" fill="#6a6a6a"/><rect x="8" y="14" width="1" height="1" fill="#6a6a6a"/><rect x="9" y="14" width="1" height="1" fill="#6a6a6a"/><rect x="10" y="14" width="1" height="1" fill="#6a6a6a"/><rect x="11" y="14" width="1" height="1" fill="#6a6a6a"/><rect x="12" y="14" width="1" height="1" fill="#6a6a6a"/><rect x="13" y="14" width="1" height="1" fill="#6a6a6a"/><rect x="14" y="14" width="1" height="1" fill="#6a6a6a"/></svg>
<svg class="r" style="left:858px;top:56px;" width="15" height="15" viewBox="0 0 15 15"><rect x="0" y="0" width="1" height="1" fill="#8a8a8a"/><rect x="0" y="2" width="1" height="1" fill="#8a8a8a"/><rect x="0" y="4" width="1" height="1" fill="#8a8a8a"/><rect x="0" y="6" width="1" height="1" fill="#8a8a8a"/><rect x="0" y="8" width="1" height="1" fill="#8a8a8a"/><rect x="0" y="10" width="1" height="1" fill="#8a8a8a"/><rect x="0" y="12" width="1" height="1" fill="#8a8a8a"/><rect x="0" y="14" width="1" height="1" fill="#8a8a8a"/><rect x="0" y="0" width="1" height="1" fill="#8a8a8a"/><rect x="2" y="0" width="1" height="1" fill="#8a8a8a"/><rect x="4" y="0" width="1" height="1" fill="#8a8a8a"/><rect x="6" y="0" width="1" height="1" fill="#8a8a8a"/><rect x="8" y="0" width="1" height="1" fill="#8a8a8a"/><rect x="10" y="0" width="1" height="1" fill="#8a8a8a"/><rect x="12" y="0" width="1" height="1" fill="#8a8a8a"/><rect x="14" y="0" width="1" height="1" fill="#8a8a8a"/><rect x="14" y="0" width="1" height="1" fill="#8a8a8a"/><rect x="14" y="2" width="1" height="1" fill="#8a8a8a"/><rect x="14" y="4" width="1" height="1" fill="#8a8a8a"/><rect x="14" y="6" width="1" height="1" fill="#8a8a8a"/><rect x="14" y="8" width="1" height="1" fill="#8a8a8a"/><rect x="14" y="10" width="1" height="1" fill="#8a8a8a"/><rect x="14" y="12" width="1" height="1" fill="#8a8a8a"/><rect x="14" y="14" width="1" height="1" fill="#8a8a8a"/><rect x="0" y="14" width="1" height="1" fill="#8a8a8a"/><rect x="2" y="14" width="1" height="1" fill="#8a8a8a"/><rect x="4" y="14" width="1" height="1" fill="#8a8a8a"/><rect x="6" y="14" width="1" height="1" fill="#8a8a8a"/><rect x="8" y="14" width="1" height="1" fill="#8a8a8a"/><rect x="10" y="14" width="1" height="1" fill="#8a8a8a"/><rect x="12" y="14" width="1" height="1" fill="#8a8a8a"/><rect x="14" y="14" width="1" height="1" fill="#8a8a8a"/></svg>
<div class="r" style="left:894px;top:52px;width:1px;height:23px;background:#a0a0a0"></div>
<div class="r" style="left:898px;top:55px;width:2px;height:2px;background:#c4c4c4"></div>
<div class="r" style="left:898px;top:59px;width:2px;height:2px;background:#c4c4c4"></div>
<div class="r" style="left:898px;top:63px;width:2px;height:2px;background:#c4c4c4"></div>
<div class="r" style="left:898px;top:67px;width:2px;height:2px;background:#c4c4c4"></div>
<div class="r" style="left:898px;top:71px;width:2px;height:2px;background:#c4c4c4"></div>
<div class="r" style="left:7px;top:79px;width:2px;height:2px;background:#c4c4c4"></div>
<div class="r" style="left:7px;top:83px;width:2px;height:2px;background:#c4c4c4"></div>
<div class="r" style="left:7px;top:87px;width:2px;height:2px;background:#c4c4c4"></div>
<div class="r" style="left:7px;top:91px;width:2px;height:2px;background:#c4c4c4"></div>
<div class="r" style="left:7px;top:95px;width:2px;height:2px;background:#c4c4c4"></div>
<div class="t" style="left:20.5px;top:80.5px;font-family:'Liberation Serif',serif;font-size:15px;line-height:15px;font-weight:700;color:#1f3350;">B</div>
<svg class="r" style="left:44px;top:82px;" width="12" height="12" viewBox="0 0 12 12"><path d="M5.5 0.5h5M1 10.5h5M8 0.5l-4.5 10" stroke="#1f3350" stroke-width="1.3" fill="none"/></svg>
<div class="t" style="left:68px;top:80px;font-family:'Liberation Serif',serif;font-size:15px;line-height:15px;font-weight:700;color:#1f3350;">U</div>
<div class="r" style="left:68px;top:94px;width:12px;height:1px;background:#1f3350"></div>
<div class="t" style="left:93px;top:80.5px;font-family:'Liberation Serif',serif;font-size:14px;line-height:14px;font-weight:700;color:#1f3350;">S</div>
<div class="r" style="left:90px;top:87px;width:14px;height:1px;background:#1f3350"></div>
<div class="t" style="left:115px;top:81.5px;font-family:'Liberation Serif',serif;font-size:14px;line-height:14px;font-weight:700;color:#1f3350;">O</div>
<div class="r" style="left:117px;top:81px;width:9px;height:1px;background:#1f3350"></div>
<div class="t" style="left:139px;top:79.5px;font-family:'Liberation Serif',serif;font-size:17px;line-height:17px;font-weight:700;color:#1f3350;font-style:italic;">f</div>
<div class="t" style="left:146px;top:87.5px;font-family:'Liberation Serif',serif;font-size:9px;line-height:9px;font-weight:700;color:#2a70d0;">2</div>
<div class="t" style="left:162px;top:79.5px;font-family:'Liberation Serif',serif;font-size:17px;line-height:17px;font-weight:700;color:#1f3350;font-style:italic;">f</div>
<div class="t" style="left:170px;top:78.5px;font-family:'Liberation Serif',serif;font-size:9px;line-height:9px;font-weight:700;color:#2a70d0;">2</div>
<div class="r" style="left:184px;top:79px;width:1px;height:18px;background:#a0a0a0"></div>
<svg class="r" style="left:193px;top:83px;" width="18" height="11" viewBox="0 0 18 11"><path d="M1 5.2h7.2v0.8q0 3.6-3.6 3.6t-3.6-3.6z" fill="#4d6ca8" stroke="#1a2a48" stroke-width="1"/><path d="M10 5.2h7.2v0.8q0 3.6-3.6 3.6t-3.6-3.6z" fill="#4d6ca8" stroke="#1a2a48" stroke-width="1"/><path d="M8 6.2h2.2" stroke="#1a2a48" stroke-width="0.9"/><path d="M2.5 5L5.2 1.3h2.3M15.7 5L13 1.3h-2.3" stroke="#1a2a48" stroke-width="1.1" fill="none"/><circle cx="3.3" cy="6.6" r="0.8" fill="#fff"/><circle cx="12.3" cy="6.6" r="0.8" fill="#fff"/></svg>
<div class="r" style="left:216px;top:79px;width:1px;height:18px;background:#a0a0a0"></div>
<div class="t" style="left:225.5px;top:79.5px;font-family:'Liberation Serif',serif;font-size:17.5px;line-height:17.5px;font-weight:700;color:#1f3350;">A</div>
<svg class="r" style="left:235px;top:81px;" width="7" height="5" viewBox="0 0 7 5"><path d="M0 4l3.5-4 3.5 4z" fill="#4aa030"/></svg>
<div class="t" style="left:250.5px;top:81.5px;font-family:'Liberation Serif',serif;font-size:15px;line-height:15px;font-weight:700;color:#1f3350;">A</div>
<svg class="r" style="left:258px;top:81px;" width="8" height="5" viewBox="0 0 8 5"><path d="M0 0h7.5l-3.75 4z" fill="#4aa030"/></svg>
<div class="r" style="left:272px;top:79px;width:1px;height:18px;background:#a0a0a0"></div>
<div class="t" style="left:285px;top:78.5px;font-family:'Liberation Serif',serif;font-size:14px;line-height:14px;font-weight:700;color:#1f3350;">A</div>
<div class="r" style="left:283px;top:92px;width:14px;height:4px;background:#e04010"></div>
<svg class="r" style="left:306px;top:79px;" width="17" height="18" viewBox="0 0 17 18"><path d="M3 12.5l1-3 8.5-8.5 2 2-8.5 8.5z" fill="#f0c830" stroke="#6a5a20" stroke-width="0.9"/><path d="M11.5 2l2 2" stroke="#4a4a4a" stroke-width="1.5"/><rect x="1" y="13" width="14" height="3.5" fill="#d8a840" stroke="#8a6a20" stroke-width="0.8"/></svg>
<div class="r" style="left:328px;top:79px;width:1px;height:18px;background:#a0a0a0"></div>
<div class="r" style="left:334px;top:77px;width:24px;height:21px;background:#cce8ff;border:1px solid #99d1ff"></div>
<svg class="r" style="left:339px;top:80px;" width="16" height="16" viewBox="0 0 16 16"><path d="M0 0.7H15" stroke="#2a3a55" stroke-width="1.1"/><path d="M0 2.7H12" stroke="#2a3a55" stroke-width="1.1"/><path d="M0 4.7H15" stroke="#2a3a55" stroke-width="1.1"/><path d="M0 6.7H12" stroke="#2a3a55" stroke-width="1.1"/><path d="M0 8.7H15" stroke="#2a3a55" stroke-width="1.1"/><path d="M0 10.7H12" stroke="#2a3a55" stroke-width="1.1"/><path d="M0 12.7H15" stroke="#2a3a55" stroke-width="1.1"/><path d="M0 14.7H12" stroke="#2a3a55" stroke-width="1.1"/></svg>
<svg class="r" style="left:362px;top:80px;" width="16" height="16" viewBox="0 0 16 16"><path d="M0 0.7H15" stroke="#2a3a55" stroke-width="1.1"/><path d="M2 2.7H13" stroke="#2a3a55" stroke-width="1.1"/><path d="M0 4.7H15" stroke="#2a3a55" stroke-width="1.1"/><path d="M2 6.7H13" stroke="#2a3a55" stroke-width="1.1"/><path d="M0 8.7H15" stroke="#2a3a55" stroke-width="1.1"/><path d="M2 10.7H13" stroke="#2a3a55" stroke-width="1.1"/><path d="M0 12.7H15" stroke="#2a3a55" stroke-width="1.1"/><path d="M2 14.7H13" stroke="#2a3a55" stroke-width="1.1"/></svg>
<svg class="r" style="left:386px;top:80px;" width="16" height="16" viewBox="0 0 16 16"><path d="M0 0.7H15" stroke="#2a3a55" stroke-width="1.1"/><path d="M3 2.7H15" stroke="#2a3a55" stroke-width="1.1"/><path d="M0 4.7H15" stroke="#2a3a55" stroke-width="1.1"/><path d="M3 6.7H15" stroke="#2a3a55" stroke-width="1.1"/><path d="M0 8.7H15" stroke="#2a3a55" stroke-width="1.1"/><path d="M3 10.7H15" stroke="#2a3a55" stroke-width="1.1"/><path d="M0 12.7H15" stroke="#2a3a55" stroke-width="1.1"/><path d="M3 14.7H15" stroke="#2a3a55" stroke-width="1.1"/></svg>
<svg class="r" style="left:410px;top:80px;" width="16" height="16" viewBox="0 0 16 16"><path d="M0 0.7H15" stroke="#2a3a55" stroke-width="1.1"/><path d="M0 2.7H15" stroke="#2a3a55" stroke-width="1.1"/><path d="M0 4.7H15" stroke="#2a3a55" stroke-width="1.1"/><path d="M0 6.7H15" stroke="#2a3a55" stroke-width="1.1"/><path d="M0 8.7H15" stroke="#2a3a55" stroke-width="1.1"/><path d="M0 10.7H15" stroke="#2a3a55" stroke-width="1.1"/><path d="M0 12.7H15" stroke="#2a3a55" stroke-width="1.1"/><path d="M0 14.7H15" stroke="#2a3a55" stroke-width="1.1"/></svg>
<svg class="r" style="left:434px;top:80px;" width="16" height="16" viewBox="0 0 16 16"><path d="M0.5 0v16M15.5 0v16" stroke="#3a8a20" stroke-width="1.2"/><path d="M3 2.5h10" stroke="#3a8a20" stroke-width="1"/><path d="M2 2.5l2.5-2v4zM14 2.5l-2.5-2v4z" fill="#3a8a20"/><path d="M3 7.5h10M3 9.5h10M3 11.5h10M3 13.5h10" stroke="#2a3a55" stroke-width="1"/></svg>
<div class="r" style="left:456px;top:79px;width:1px;height:18px;background:#a0a0a0"></div>
<svg class="r" style="left:467px;top:80px;" width="16" height="15" viewBox="0 0 16 15"><rect x="0" y="1" width="2.5" height="2.5" fill="#2a70d0"/><rect x="0" y="6" width="2.5" height="2.5" fill="#2a70d0"/><rect x="0" y="11" width="2.5" height="2.5" fill="#2a70d0"/><path d="M4.5 2.5h10M4.5 7.5h10M4.5 12.5h10" stroke="#2a3a55" stroke-width="1"/></svg>
<svg class="r" style="left:491px;top:80px;" width="16" height="17" viewBox="0 0 16 17"><text x="0.5" y="5" font-size="5.5" font-weight="700" font-family="Liberation Sans" fill="#2a70d0">1</text><text x="0.5" y="10" font-size="5.5" font-weight="700" font-family="Liberation Sans" fill="#2a70d0">2</text><text x="0.5" y="15" font-size="5.5" font-weight="700" font-family="Liberation Sans" fill="#2a70d0">3</text><path d="M4.5 2.5h10M4.5 7.5h10M4.5 12.5h10" stroke="#2a3a55" stroke-width="1"/></svg>
<div class="r" style="left:512px;top:79px;width:1px;height:18px;background:#a0a0a0"></div>
<svg class="r" style="left:522px;top:80px;" width="16" height="17" viewBox="0 0 16 17"><path d="M0 1.5h15M0 12.5h15M0 14.5h10" stroke="#2a3a55" stroke-width="1"/><rect x="7" y="3.3" width="8" height="1.7" fill="#2a3a55"/><rect x="7" y="6" width="8" height="1.7" fill="#2a3a55"/><rect x="7" y="9" width="8" height="1.7" fill="#2a3a55"/><path d="M0 6.8l3.5-3.5v7z" fill="#4aa030"/><rect x="3" y="5.8" width="3" height="2" fill="#4aa030"/></svg>
<svg class="r" style="left:546px;top:80px;" width="16" height="17" viewBox="0 0 16 17"><path d="M0 1.5h15M0 12.5h15M0 14.5h10" stroke="#2a3a55" stroke-width="1"/><rect x="7" y="3.3" width="8" height="1.7" fill="#2a3a55"/><rect x="7" y="6" width="8" height="1.7" fill="#2a3a55"/><rect x="7" y="9" width="8" height="1.7" fill="#2a3a55"/><path d="M6 6.8l-3.5-3.5v7z" fill="#4aa030"/><rect x="0" y="5.8" width="3" height="2" fill="#4aa030"/></svg>
<div class="r" style="left:568px;top:79px;width:1px;height:18px;background:#a0a0a0"></div>
<svg class="r" style="left:579px;top:80px;" width="15" height="17" viewBox="0 0 15 17"><path d="M5 1.5h9M1 3.5h13M1 5.5h13M1 7.5h13M1 9.5h6" stroke="#2a3a55" stroke-width="1"/><rect x="0" y="11" width="14" height="4" fill="#e04010"/></svg>
<div class="r" style="left:7px;top:103px;width:2px;height:2px;background:#c4c4c4"></div>
<div class="r" style="left:7px;top:107px;width:2px;height:2px;background:#c4c4c4"></div>
<div class="r" style="left:7px;top:111px;width:2px;height:2px;background:#c4c4c4"></div>
<div class="r" style="left:7px;top:115px;width:2px;height:2px;background:#c4c4c4"></div>
<div class="r" style="left:7px;top:119px;width:2px;height:2px;background:#c4c4c4"></div>
<div class="r" style="left:14px;top:102px;width:232px;height:22px;background:#fff;border:1px solid #7a7a7a"></div>
<div class="r" style="left:245px;top:102px;width:145px;height:22px;background:#fff;border:1px solid #7a7a7a"></div>
<div class="r" style="left:389px;top:102px;width:63px;height:22px;background:#fff;border:1px solid #7a7a7a"></div>
<svg class="r" style="left:232px;top:110px;" width="9" height="6" viewBox="0 0 9 6"><path d="M0.5 0.5l4 4 4-4" stroke="#404040" fill="none" stroke-width="1"/></svg>
<svg class="r" style="left:376px;top:110px;" width="9" height="6" viewBox="0 0 9 6"><path d="M0.5 0.5l4 4 4-4" stroke="#404040" fill="none" stroke-width="1"/></svg>
<svg class="r" style="left:438px;top:110px;" width="9" height="6" viewBox="0 0 9 6"><path d="M0.5 0.5l4 4 4-4" stroke="#404040" fill="none" stroke-width="1"/></svg>
<svg class="r" style="left:20px;top:105px;" width="13" height="10" viewBox="0 0 13 10"><path d="M5.5 0.5h6.5M0 2.5h12M0 4.5h12M0 6.5h6.5M0 8.5h6.5" stroke="#34496a" stroke-width="1.1"/></svg>
<div class="t" style="left:27.5px;top:106.5px;font-family:'Liberation Serif',serif;font-size:15px;line-height:15px;font-weight:700;color:#34496a;">a</div>
<div class="r" style="left:847px;top:100px;width:1px;height:25px;background:#a0a0a0"></div>
<div class="r" style="left:851px;top:103px;width:2px;height:2px;background:#c4c4c4"></div>
<div class="r" style="left:851px;top:107px;width:2px;height:2px;background:#c4c4c4"></div>
<div class="r" style="left:851px;top:111px;width:2px;height:2px;background:#c4c4c4"></div>
<div class="r" style="left:851px;top:115px;width:2px;height:2px;background:#c4c4c4"></div>
<div class="r" style="left:851px;top:119px;width:2px;height:2px;background:#c4c4c4"></div>
<div class="r" style="left:892px;top:101px;width:14px;height:21px;background:#e1e1e1;border:1px solid #adadad;border-right:none"></div>
<div class="t" style="left:36.30px;top:106.50px;font-size:10.5px;line-height:12px;color:#000;letter-spacing:0.103px;">Heading 1</div>
<div class="t" style="left:247.80px;top:106.00px;font-size:10.5px;line-height:12px;color:#000;letter-spacing:0.104px;">Tahoma</div>
<div class="t" style="left:394.20px;top:106.00px;font-size:10.5px;line-height:12px;color:#000;transform:scaleX(0.9095);transform-origin:0 0;">16</div>
<div class="t" style="left:858.30px;top:106.00px;font-size:12px;line-height:14px;color:#000;transform:scaleX(0.9831);transform-origin:0 0;">Units:</div>
<div class="t" style="left:894.00px;top:107.00px;font-size:11px;line-height:12px;color:#000;">pi:</div>
<svg class="r" style="left:8px;top:155px;" width="16" height="16" viewBox="0 0 16 16"><rect x="0.5" y="0.5" width="11" height="12" fill="#fff" stroke="#999"/><rect x="0.5" y="0.5" width="11" height="3" fill="#888"/><path d="M0.5 6.5h11M0.5 9.5h11M4 3.5v9M8 3.5v9" stroke="#aaa"/><ellipse cx="12" cy="9" rx="3.5" ry="1.5" fill="#ccc" stroke="#888"/><path d="M8.5 9v5q3.5 2.5 7 0v-5" fill="#ccc" stroke="#888"/></svg>
<svg class="r" style="left:157px;top:155px;" width="16" height="16" viewBox="0 0 16 16"><rect x="0.5" y="0.5" width="15" height="15" fill="#f0f0f0" stroke="#a0a0a0"/><path d="M8 3l1.5 3.2 3.4 0.4-2.5 2.3 0.7 3.4-3.1-1.7-3.1 1.7 0.7-3.4-2.5-2.3 3.4-0.4z" fill="#a0a0a0"/></svg>
<svg class="r" style="left:282px;top:155px;" width="16" height="16" viewBox="0 0 16 16"><rect x="0.5" y="0.5" width="15" height="15" fill="#fff" stroke="#999"/><rect x="0.5" y="0.5" width="15" height="4" fill="#999"/><rect x="0.5" y="0.5" width="4" height="15" fill="#bbb"/><rect x="11.5" y="0.5" width="4" height="15" fill="#888"/><path d="M0.5 8h15M0.5 11.5h15M4.5 4.5v11M8 4.5v11M11.5 4.5v11" stroke="#aaa" stroke-width="0.8"/></svg>
<svg class="r" style="left:405px;top:154px;" width="17" height="18" viewBox="0 0 17 18"><path d="M0.5 1.5h7.5l3.5 3.5v10.5h-11z" fill="#f4f8fc" stroke="#6a7a95"/><path d="M8 1.5v3.5h3.5" fill="#fff" stroke="#6a7a95"/><path d="M3 6.5h4M3 8.5h4M3 10.5h4M3 12.5h4" stroke="#9aa8bc" stroke-width="0.9"/><path d="M8.5 8.5q3.75-2 7.5 0v7.5q-3.75 2-7.5 0z" fill="#9cc4e8" stroke="#3a6aa8"/><path d="M8.5 11q3.75 1.6 7.5 0M8.5 13.5q3.75 1.6 7.5 0" stroke="#3a6aa8" fill="none" stroke-width="0.9"/></svg>
<div class="r" style="left:206px;top:176px;width:7px;height:13px;background:#c0c0c0"></div>
<svg class="r" style="left:212px;top:174px;" width="10" height="23" viewBox="0 0 10 23"><path d="M0.5 0.5h9v2l-3.5 4.5 3.5 4.5v2h-9v-2l3.5-4.5-3.5-4.5z" fill="#f0f0f0" stroke="#999"/><rect x="0.5" y="14" width="9" height="8" fill="#f0f0f0" stroke="#999"/></svg>
<div class="r" style="left:875px;top:176px;width:28px;height:13px;background:#f0f0f0"></div>
<div class="r" style="left:875px;top:176px;width:10px;height:13px;background:#c0c0c0"></div>
<div class="r" style="left:226px;top:182px;width:1px;height:2px;background:#000"></div>
<div class="r" style="left:236px;top:182px;width:1px;height:2px;background:#000"></div>
<div class="r" style="left:246px;top:182px;width:1px;height:2px;background:#000"></div>
<div class="r" style="left:256px;top:182px;width:1px;height:2px;background:#000"></div>
<div class="r" style="left:266px;top:181px;width:1px;height:4px;background:#000"></div>
<div class="r" style="left:276px;top:182px;width:1px;height:2px;background:#000"></div>
<div class="r" style="left:286px;top:182px;width:1px;height:2px;background:#000"></div>
<div class="r" style="left:296px;top:182px;width:1px;height:2px;background:#000"></div>
<div class="r" style="left:306px;top:182px;width:1px;height:2px;background:#000"></div>
<div class="r" style="left:326px;top:182px;width:1px;height:2px;background:#000"></div>
<div class="r" style="left:336px;top:182px;width:1px;height:2px;background:#000"></div>
<div class="r" style="left:346px;top:182px;width:1px;height:2px;background:#000"></div>
<div class="r" style="left:356px;top:182px;width:1px;height:2px;background:#000"></div>
<div class="r" style="left:366px;top:181px;width:1px;height:4px;background:#000"></div>
<div class="r" style="left:376px;top:182px;width:1px;height:2px;background:#000"></div>
<div class="r" style="left:386px;top:182px;width:1px;height:2px;background:#000"></div>
<div class="r" style="left:396px;top:182px;width:1px;height:2px;background:#000"></div>
<div class="r" style="left:406px;top:182px;width:1px;height:2px;background:#000"></div>
<div class="r" style="left:426px;top:182px;width:1px;height:2px;background:#000"></div>
<div class="r" style="left:436px;top:182px;width:1px;height:2px;background:#000"></div>
<div class="r" style="left:446px;top:182px;width:1px;height:2px;background:#000"></div>
<div class="r" style="left:456px;top:182px;width:1px;height:2px;background:#000"></div>
<div class="r" style="left:466px;top:181px;width:1px;height:4px;background:#000"></div>
<div class="r" style="left:476px;top:182px;width:1px;height:2px;background:#000"></div>
<div class="r" style="left:486px;top:182px;width:1px;height:2px;background:#000"></div>
<div class="r" style="left:496px;top:182px;width:1px;height:2px;background:#000"></div>
<div class="r" style="left:506px;top:182px;width:1px;height:2px;background:#000"></div>
<div class="r" style="left:526px;top:182px;width:1px;height:2px;background:#000"></div>
<div class="r" style="left:536px;top:182px;width:1px;height:2px;background:#000"></div>
<div class="r" style="left:546px;top:182px;width:1px;height:2px;background:#000"></div>
<div class="r" style="left:556px;top:182px;width:1px;height:2px;background:#000"></div>
<div class="r" style="left:566px;top:181px;width:1px;height:4px;background:#000"></div>
<div class="r" style="left:576px;top:182px;width:1px;height:2px;background:#000"></div>
<div class="r" style="left:586px;top:182px;width:1px;height:2px;background:#000"></div>
<div class="r" style="left:596px;top:182px;width:1px;height:2px;background:#000"></div>
<div class="r" style="left:606px;top:182px;width:1px;height:2px;background:#000"></div>
<div class="r" style="left:626px;top:182px;width:1px;height:2px;background:#000"></div>
<div class="r" style="left:636px;top:182px;width:1px;height:2px;background:#000"></div>
<div class="r" style="left:646px;top:182px;width:1px;height:2px;background:#000"></div>
<div class="r" style="left:656px;top:182px;width:1px;height:2px;background:#000"></div>
<div class="r" style="left:666px;top:181px;width:1px;height:4px;background:#000"></div>
<div class="r" style="left:676px;top:182px;width:1px;height:2px;background:#000"></div>
<div class="r" style="left:686px;top:182px;width:1px;height:2px;background:#000"></div>
<div class="r" style="left:696px;top:182px;width:1px;height:2px;background:#000"></div>
<div class="r" style="left:706px;top:182px;width:1px;height:2px;background:#000"></div>
<div class="r" style="left:726px;top:182px;width:1px;height:2px;background:#000"></div>
<div class="r" style="left:736px;top:182px;width:1px;height:2px;background:#000"></div>
<div class="r" style="left:746px;top:182px;width:1px;height:2px;background:#000"></div>
<div class="r" style="left:756px;top:182px;width:1px;height:2px;background:#000"></div>
<div class="r" style="left:766px;top:181px;width:1px;height:4px;background:#000"></div>
<div class="r" style="left:776px;top:182px;width:1px;height:2px;background:#000"></div>
<div class="r" style="left:786px;top:182px;width:1px;height:2px;background:#000"></div>
<div class="r" style="left:796px;top:182px;width:1px;height:2px;background:#000"></div>
<div class="r" style="left:806px;top:182px;width:1px;height:2px;background:#000"></div>
<div class="r" style="left:826px;top:182px;width:1px;height:2px;background:#000"></div>
<div class="r" style="left:836px;top:182px;width:1px;height:2px;background:#000"></div>
<div class="r" style="left:846px;top:182px;width:1px;height:2px;background:#000"></div>
<div class="r" style="left:856px;top:182px;width:1px;height:2px;background:#000"></div>
<div class="r" style="left:866px;top:181px;width:1px;height:4px;background:#000"></div>
<div class="r" style="left:876px;top:182px;width:1px;height:2px;background:#000"></div>
<div class="r" style="left:886px;top:182px;width:1px;height:2px;background:#000"></div>
<div class="r" style="left:896px;top:182px;width:1px;height:2px;background:#000"></div>
<div class="t" style="left:300px;top:177px;width:32px;text-align:center;font-size:11px;line-height:12px;color:#000;letter-spacing:-0.3px">100</div>
<div class="t" style="left:400px;top:177px;width:32px;text-align:center;font-size:11px;line-height:12px;color:#000;letter-spacing:-0.3px">200</div>
<div class="t" style="left:500px;top:177px;width:32px;text-align:center;font-size:11px;line-height:12px;color:#000;letter-spacing:-0.3px">300</div>
<div class="t" style="left:600px;top:177px;width:32px;text-align:center;font-size:11px;line-height:12px;color:#000;letter-spacing:-0.3px">400</div>
<div class="t" style="left:700px;top:177px;width:32px;text-align:center;font-size:11px;line-height:12px;color:#000;letter-spacing:-0.3px">500</div>
<div class="t" style="left:800px;top:177px;width:32px;text-align:center;font-size:11px;line-height:12px;color:#000;letter-spacing:-0.3px">600</div>
<div class="r" style="left:264px;top:190px;width:1px;height:2px;background:#000"></div>
<div class="r" style="left:312px;top:190px;width:1px;height:2px;background:#000"></div>
<div class="r" style="left:360px;top:190px;width:1px;height:2px;background:#000"></div>
<div class="r" style="left:408px;top:190px;width:1px;height:2px;background:#000"></div>
<div class="r" style="left:456px;top:190px;width:1px;height:2px;background:#000"></div>
<div class="r" style="left:504px;top:190px;width:1px;height:2px;background:#000"></div>
<div class="r" style="left:552px;top:190px;width:1px;height:2px;background:#000"></div>
<div class="r" style="left:600px;top:190px;width:1px;height:2px;background:#000"></div>
<div class="r" style="left:648px;top:190px;width:1px;height:2px;background:#000"></div>
<div class="r" style="left:696px;top:190px;width:1px;height:2px;background:#000"></div>
<div class="r" style="left:744px;top:190px;width:1px;height:2px;background:#000"></div>
<div class="r" style="left:792px;top:190px;width:1px;height:2px;background:#000"></div>
<div class="r" style="left:840px;top:190px;width:1px;height:2px;background:#000"></div>
<svg class="r" style="left:870px;top:182px;" width="10" height="9" viewBox="0 0 10 9"><path d="M0.5 8.5v-4l4.5-4 4.5 4v4z" fill="#f0f0f0" stroke="#999"/></svg>
<svg class="r" style="left:888px;top:205px;" width="9" height="7" viewBox="0 0 9 7"><path d="M1 5.5l3.5-3.5 3.5 3.5" stroke="#606060" stroke-width="2.2" fill="none"/></svg>
<svg class="r" style="left:888px;top:779px;" width="9" height="7" viewBox="0 0 9 7"><path d="M1 1.5l3.5 3.5 3.5-3.5" stroke="#606060" stroke-width="2.2" fill="none"/></svg>
<div class="r" style="left:905px;top:52px;width:1px;height:744px;background:#d9d9d9"></div>
<div class="t" style="left:809.80px;top:802.50px;font-size:9px;line-height:10px;color:#000;font-weight:700;transform:scaleX(0.7741);transform-origin:0 0;">Skin</div>
<div class="t" style="left:851.80px;top:802.50px;font-size:9px;line-height:10px;color:#000;font-weight:700;transform:scaleX(0.7980);transform-origin:0 0;">Language</div>
<div class="r" style="left:904px;top:806px;width:2px;height:2px;background:#b8b8b8"></div>
<div class="r" style="left:900px;top:810px;width:2px;height:2px;background:#b8b8b8"></div>
<div class="r" style="left:904px;top:810px;width:2px;height:2px;background:#b8b8b8"></div>
<div class="r" style="left:896px;top:814px;width:2px;height:2px;background:#b8b8b8"></div>
<div class="r" style="left:900px;top:814px;width:2px;height:2px;background:#b8b8b8"></div>
<div class="r" style="left:904px;top:814px;width:2px;height:2px;background:#b8b8b8"></div>
<svg class="r" style="left:624px;top:737px;" width="95" height="17" viewBox="0 0 95 17"><circle cx="8.5" cy="8.2" r="7.6" fill="none" stroke="#f47c30" stroke-width="1.3"/><circle cx="25.6" cy="8.2" r="7.6" fill="none" stroke="#f47c30" stroke-width="1.3"/><circle cx="42.7" cy="8.2" r="7.6" fill="none" stroke="#c8c8c8" stroke-width="1.3"/><circle cx="59.8" cy="8.2" r="7.6" fill="none" stroke="#c8c8c8" stroke-width="1.3"/><circle cx="76.9" cy="8.2" r="7.6" fill="none" stroke="#c8c8c8" stroke-width="1.3"/></svg>
<svg class="r" style="left:743px;top:736px;" width="95" height="19" viewBox="0 0 95 19"><polygon points="9.40,1.30 12.28,5.74 17.39,7.10 14.06,11.21 14.34,16.50 9.40,14.60 4.46,16.50 4.74,11.21 1.41,7.10 6.52,5.74" fill="none" stroke="#2d7be0" stroke-width="1.1" stroke-linejoin="round"/><polygon points="27.40,1.30 30.28,5.74 35.39,7.10 32.06,11.21 32.34,16.50 27.40,14.60 22.46,16.50 22.74,11.21 19.41,7.10 24.52,5.74" fill="none" stroke="#2d7be0" stroke-width="1.1" stroke-linejoin="round"/><polygon points="45.40,1.30 48.28,5.74 53.39,7.10 50.06,11.21 50.34,16.50 45.40,14.60 40.46,16.50 40.74,11.21 37.41,7.10 42.52,5.74" fill="none" stroke="#7a7a7a" stroke-width="1.1" stroke-linejoin="round"/><polygon points="63.40,1.30 66.28,5.74 71.39,7.10 68.06,11.21 68.34,16.50 63.40,14.60 58.46,16.50 58.74,11.21 55.41,7.10 60.52,5.74" fill="none" stroke="#7a7a7a" stroke-width="1.1" stroke-linejoin="round"/><polygon points="81.40,1.30 84.28,5.74 89.39,7.10 86.06,11.21 86.34,16.50 81.40,14.60 76.46,16.50 76.74,11.21 73.41,7.10 78.52,5.74" fill="none" stroke="#7a7a7a" stroke-width="1.1" stroke-linejoin="round"/></svg>
<svg class="r" style="left:174px;top:231px;" width="9" height="6" viewBox="0 0 9 6"><path d="M0.5 0.5l4 4 4-4" stroke="#333" fill="none" stroke-width="1"/></svg>
<div class="r" style="left:1px;top:149px;width:1px;height:647px;background:#dadde0"></div>
<div class="r" style="left:0px;top:0px;width:908px;height:817px;border:1px solid #c4a98b"></div>
</body></html>
